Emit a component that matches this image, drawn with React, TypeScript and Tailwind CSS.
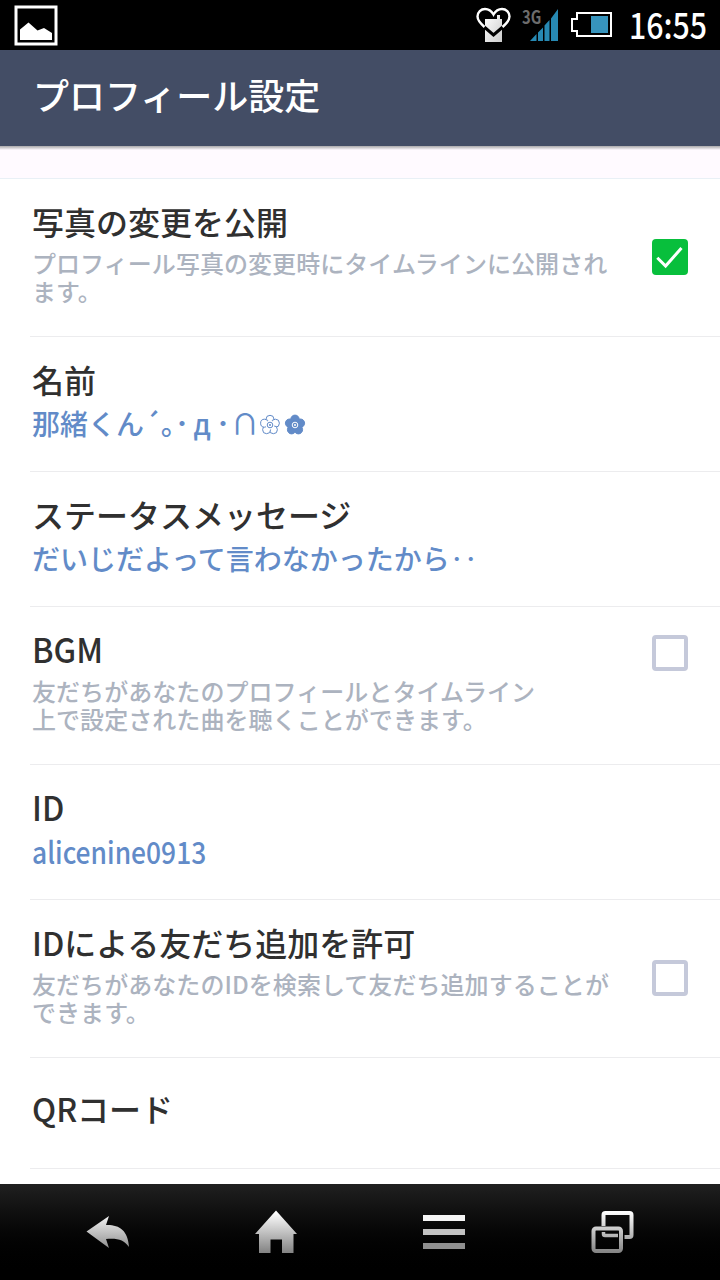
import React, { useState } from 'react';

interface SettingRowProps {
  title: React.ReactNode;
  value?: React.ReactNode;
  description?: React.ReactNode;
  checked?: boolean;
  onToggle?: () => void;
  checkTop?: string;
  className?: string;
}

const CheckBox: React.FC<{ checked: boolean; onToggle?: () => void; className?: string }> = ({ checked, onToggle, className = '' }) => (
  <button
    type="button"
    role="checkbox"
    aria-checked={checked}
    onClick={onToggle}
    className={`w-9 h-9 shrink-0 rounded-[4px] ${checked ? 'bg-[#08bf3c]' : 'border-4 border-[#c5c9da] bg-white'} ${className}`}
  >
    {checked && (
      <svg viewBox="0 0 36 36" className="w-9 h-9" fill="none" stroke="#fff" strokeWidth="3">
        <path d="M5.3 18.8 L13.6 27 L29.5 9" />
      </svg>
    )}
  </button>
);

const SettingRow: React.FC<SettingRowProps> = ({ title, value, description, checked, onToggle, checkTop, className = 'h-[135px] pt-[23px]' }) => (
  <div className={`ml-[30px] pl-[2px] pr-8 flex justify-between border-b border-[#ececee] ${className}`}>
    <div className="whitespace-nowrap">
      <div className="text-[32px] leading-[38px] font-medium text-[#303030]">{title}</div>
      {value && <div className="mt-2 text-[28px] leading-[34px] font-medium text-[#628bc8]">{value}</div>}
      {description && <div className="mt-[9px] text-[24px] leading-[28px] font-medium tracking-[0.06px] text-[#acb3bf]">{description}</div>}
    </div>
    {checked !== undefined && <CheckBox checked={checked} onToggle={onToggle} className={checkTop} />}
  </div>
);

const petals = [
  { cx: 11, cy: 5.3 },
  { cx: 16.4, cy: 9.2 },
  { cx: 14.4, cy: 15.7 },
  { cx: 7.6, cy: 15.7 },
  { cx: 5.6, cy: 9.2 },
];

const Flower: React.FC<{ filled?: boolean }> = ({ filled }) => (
  <svg width="22" height="22" viewBox="0 0 22 22" className="mt-[8px] mr-[3px]" fill={filled ? '#628bc8' : '#fff'} stroke="#628bc8" strokeWidth="1">
    {petals.map((p) => (
      <circle key={`${p.cx}-${p.cy}`} cx={p.cx} cy={p.cy} r={filled ? 4.2 : 4} />
    ))}
    <circle cx="11" cy="11" r="4.4" stroke="none" />
    <circle cx="11" cy="11" r="2.8" fill="none" stroke={filled ? '#fff' : '#628bc8'} />
    <circle cx="11" cy="11" r="1" fill={filled ? '#fff' : '#628bc8'} stroke="none" />
  </svg>
);

const StatusBar: React.FC = () => (
  <div className="h-[50px] bg-black flex items-center justify-between pl-[14px] pr-[13px]">
    <svg width="44" height="41" viewBox="0 0 44 41">
      <rect x="2" y="2" width="40" height="37" fill="none" stroke="#fff" strokeWidth="3" />
      <path d="M6 35 V24.5 L14.5 17.5 L23.5 25.5 L30 23 L38 28 V35 Z" fill="#fff" />
    </svg>
    <div className="flex items-center h-full">
      <svg width="36" height="36" viewBox="0 0 36 36" className="mr-[10px]">
        <defs>
          <linearGradient id="heart" x1="0" y1="0" x2="1" y2="1">
            <stop offset="0" stopColor="#fff" />
            <stop offset="1" stopColor="#ccc" />
          </linearGradient>
        </defs>
        <path d="M9 12 H21 V8 H24 V12 H26 V35 H9 Z" fill="url(#heart)" />
        <path d="M6.5 18.5 L17.5 28 L28.5 18.5" fill="none" stroke="#000" strokeWidth="3" />
        <path d="M8.5 20 C4 16 1.5 13 1.5 9.5 C1.5 5 5 2 9 2 C13 2 15.5 4 17.5 7.5 C19.5 4 22 2 26 2 C30 2 33.5 5 33.5 9.5 C33.5 13 31 16 26.5 20" fill="none" stroke="#fff" strokeWidth="2.4" />
      </svg>
      <div className="flex w-[38px] h-full">
        <span className="w-[20px] shrink-0 pt-[7px] text-[18px] leading-[18px] font-bold text-[#6c6c6c]">
          <span className="inline-block origin-left scale-x-[0.82]">3G</span>
        </span>
        <svg width="30" height="33" viewBox="0 0 30 33" className="mt-[8px] -ml-[12px] shrink-0" fill="#2789b3">
          <path d="M0 33 L6.5 26 V33 Z M8 24.5 L13 19.5 V33 H8 Z M14.5 17.5 L19.5 12 V33 H14.5 Z M21 10.5 L28 1 V33 H21 Z" />
        </svg>
      </div>
      <svg width="42" height="26" viewBox="0 0 42 26" className="ml-[11px]">
        <path d="M6 1 H40 V24 H6 V19 H1 V7 H6 Z" fill="none" stroke="#fff" strokeWidth="2" />
        <rect x="20" y="4" width="17" height="17" fill="#3794bd" />
      </svg>
      <div className="ml-[16px] w-[78px] -mt-[3px] text-[35px] leading-[47px] text-white font-medium">
        <span className="inline-block origin-left scale-x-[0.865]">16:55</span>
      </div>
    </div>
  </div>
);

const NavBar: React.FC = () => (
  <div className="h-24 shrink-0 flex items-center justify-between pl-[86px] pr-[86px] bg-gradient-to-b from-[#202020] to-black">
    <svg width="44" height="44" viewBox="0 0 44 44">
      <defs>
        <linearGradient id="metal" gradientUnits="userSpaceOnUse" x1="0" y1="2" x2="0" y2="42">
          <stop offset="0" stopColor="#fff" />
          <stop offset="1" stopColor="#858585" />
        </linearGradient>
      </defs>
      <path d="M0.5 21.5 L23 6 L20 15 C33 14.5 42 20 43 37 C38 29.5 31 28 20 29 L23 38 Z" fill="url(#metal)" />
    </svg>
    <svg width="42" height="44" viewBox="0 0 42 44" className="-ml-[1px]">
      <path d="M21 0.5 L42 24 H38.5 V43 H27 V29.5 H15.5 V43 H4 V24 H0 Z" fill="url(#metal)" />
    </svg>
    <div className="w-[42px] flex flex-col gap-[8px]">
      <div className="h-[6px] bg-[#f5f5f5]" />
      <div className="h-[6px] bg-[#c2c2c2]" />
      <div className="h-[6px] bg-[#8f8f8f]" />
    </div>
    <svg width="43" height="44" viewBox="0 0 43 44" fill="none" stroke="url(#metal)" strokeWidth="4">
      <path d="M12.5 16 V5 Q12.5 3 14.5 3 H38.5 Q40.5 3 40.5 5 V25 Q40.5 27 38.5 27 H33.5" />
      <path d="M12.5 22 V24 Q12.5 25.5 14 25.5 H27" strokeWidth="3.5" />
      <rect x="2.5" y="18.5" width="27.5" height="22.5" rx="2.5" />
    </svg>
  </div>
);

const App: React.FC = () => {
  const [photoPublic, setPhotoPublic] = useState(true);
  const [bgm, setBgm] = useState(false);
  const [allowId, setAllowId] = useState(false);

  return (
    <div lang="ja" className="w-[720px] h-[1280px] flex flex-col overflow-hidden bg-white font-['Noto_Sans_CJK_JP',sans-serif]">
      <StatusBar />
      <header className="h-24 shrink-0 bg-[#434d65] pl-[33px] flex items-center text-[36px] leading-[44px] font-medium text-white">
        <h1 className="-mt-[8px]">プロフィール設定</h1>
      </header>
      <div className="h-[33px] shrink-0 bg-[#fffaff] border-b border-[#e9f0f6]">
        <div className="h-[4px] bg-gradient-to-b from-[#a9a8aa] to-[#fffaff]" />
      </div>

      <main className="flex-1 min-h-0">
        <SettingRow
          title="写真の変更を公開"
          description={<>プロフィール写真の変更時にタイムラインに公開され<br />ます。</>}
          checked={photoPublic}
          onToggle={() => setPhotoPublic(!photoPublic)}
          checkTop="mt-[37px]"
          className="h-[158px] pt-[23px]"
        />
        <SettingRow
          title="名前"
          value={
            <span className="flex">
              <span>那緒くん</span>
              <span className="w-[14px]">´</span>
              <span className="w-[17px] pl-[3px]">｡</span>
              <span className="w-[14px] text-center">･</span>
              <span className="w-[26px] text-center">д</span>
              <span className="w-[16px] text-center">･</span>
              <span className="w-[28px] text-center">∩</span>
              <Flower />
              <Flower filled />
            </span>
          }
        />
        <SettingRow title="ステータスメッセージ" value="だいじだよって言わなかったから‥" />
        <SettingRow
          title={<span className="inline-block origin-left scale-x-[0.95] text-[34px]">BGM</span>}
          description={<>友だちがあなたのプロフィールとタイムライン<br />上で設定された曲を聴くことができます。</>}
          checked={bgm}
          onToggle={() => setBgm(!bgm)}
          checkTop="mt-[5px]"
          className="h-[158px] pt-[23px]"
        />
        <SettingRow
          title={<span className="inline-block origin-left scale-x-[0.94] text-[34px]">ID</span>}
          value={<span className="inline-block origin-left scale-x-[0.88] text-[30px]">alicenine0913</span>}
        />
        <SettingRow
          title="IDによる友だち追加を許可"
          description={<>友だちがあなたのIDを検索して友だち追加することが<br />できます。</>}
          checked={allowId}
          onToggle={() => setAllowId(!allowId)}
          checkTop="mt-[37px]"
          className="h-[158px] pt-[23px]"
        />
        <SettingRow title="QRコード" className="h-[111px] pt-[31px]" />
      </main>

      <NavBar />
    </div>
  );
};

export default App;
